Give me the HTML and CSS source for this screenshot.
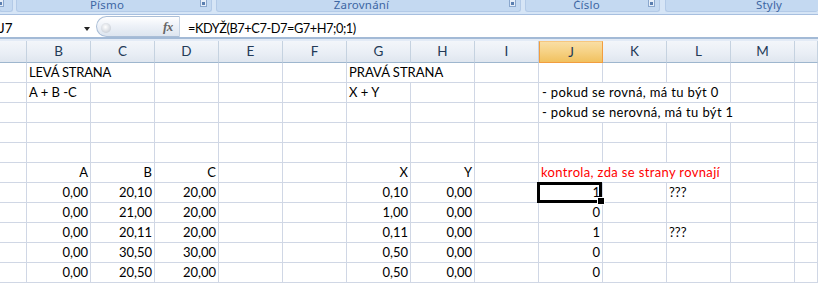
FILE: index.html
```html
<!DOCTYPE html>
<html lang="cs">
<head>
<meta charset="utf-8">
<title>Excel</title>
<link rel="stylesheet" href="styles.css">
</head>
<body>
<div class="ribbon">
  <div class="group g0"><span class="launcher"></span></div>
  <div class="group g1"><span class="glabel">Písmo</span><span class="launcher"></span></div>
  <div class="group g2"><span class="glabel">Zarovnání</span><span class="launcher"></span></div>
  <div class="group g3"><span class="glabel">Číslo</span><span class="launcher"></span></div>
  <div class="group g4"><span class="glabel">Styly</span></div>
</div>
<div class="fbar">
  <div class="namebox"><span class="nb-text">J7</span><span class="dd"></span></div>
  <div class="pill"><span class="knob"></span><span class="fx">fx</span></div>
  <div class="formula">=KDYŽ(B7+C7-D7=G7+H7;0;1)</div>
</div>
<div class="fbar-gap"></div>
<div class="sheet">
  <div class="hd"></div><div class="hd">B</div><div class="hd">C</div><div class="hd">D</div><div class="hd">E</div><div class="hd">F</div><div class="hd">G</div><div class="hd">H</div><div class="hd">I</div><div class="hd hd-sel">J</div><div class="hd">K</div><div class="hd">L</div><div class="hd">M</div><div class="hd"></div>

  <div class="c"></div><div class="c s2 caps">LEVÁ STRANA</div><div class="c"></div><div class="c"></div><div class="c"></div><div class="c s2">PRAVÁ STRANA</div><div class="c"></div><div class="c"></div><div class="c"></div><div class="c"></div><div class="c"></div><div class="c"></div>

  <div class="c"></div><div class="c">A + B -C</div><div class="c"></div><div class="c"></div><div class="c"></div><div class="c"></div><div class="c">X + Y</div><div class="c"></div><div class="c"></div><div class="c s3 t">- pokud se rovná, má tu být 0</div><div class="c"></div><div class="c"></div>

  <div class="c"></div><div class="c"></div><div class="c"></div><div class="c"></div><div class="c"></div><div class="c"></div><div class="c"></div><div class="c"></div><div class="c"></div><div class="c s4 t">- pokud se nerovná, má tu být 1</div><div class="c"></div>

  <div class="c"></div><div class="c"></div><div class="c"></div><div class="c"></div><div class="c"></div><div class="c"></div><div class="c"></div><div class="c"></div><div class="c"></div><div class="c"></div><div class="c"></div><div class="c"></div><div class="c"></div><div class="c"></div>

  <div class="c"></div><div class="c"></div><div class="c"></div><div class="c"></div><div class="c"></div><div class="c"></div><div class="c"></div><div class="c"></div><div class="c"></div><div class="c"></div><div class="c"></div><div class="c"></div><div class="c"></div><div class="c"></div>

  <div class="c"></div><div class="c r">A</div><div class="c r">B</div><div class="c r">C</div><div class="c"></div><div class="c"></div><div class="c r">X</div><div class="c r">Y</div><div class="c"></div><div class="c s3 t red">kontrola, zda se strany rovnají</div><div class="c"></div><div class="c"></div>

  <div class="c"></div><div class="c r">0,00</div><div class="c r">20,10</div><div class="c r">20,00</div><div class="c"></div><div class="c"></div><div class="c r">0,10</div><div class="c r">0,00</div><div class="c"></div><div class="c r sel">1</div><div class="c"></div><div class="c">???</div><div class="c"></div><div class="c"></div>

  <div class="c"></div><div class="c r">0,00</div><div class="c r">21,00</div><div class="c r">20,00</div><div class="c"></div><div class="c"></div><div class="c r">1,00</div><div class="c r">0,00</div><div class="c"></div><div class="c r">0</div><div class="c"></div><div class="c"></div><div class="c"></div><div class="c"></div>

  <div class="c"></div><div class="c r">0,00</div><div class="c r">20,11</div><div class="c r">20,00</div><div class="c"></div><div class="c"></div><div class="c r">0,11</div><div class="c r">0,00</div><div class="c"></div><div class="c r">1</div><div class="c"></div><div class="c">???</div><div class="c"></div><div class="c"></div>

  <div class="c"></div><div class="c r">0,00</div><div class="c r">30,50</div><div class="c r">30,00</div><div class="c"></div><div class="c"></div><div class="c r">0,50</div><div class="c r">0,00</div><div class="c"></div><div class="c r">0</div><div class="c"></div><div class="c"></div><div class="c"></div><div class="c"></div>

  <div class="c"></div><div class="c r">0,00</div><div class="c r">20,50</div><div class="c r">20,00</div><div class="c"></div><div class="c"></div><div class="c r">0,50</div><div class="c r">0,00</div><div class="c"></div><div class="c r">0</div><div class="c"></div><div class="c"></div><div class="c"></div><div class="c"></div>
</div>
</body>
</html>
```

FILE: styles.css
```css
* {
  box-sizing: border-box;
  margin: 0;
  padding: 0;
}

body {
  width: 818px;
  height: 283px;
  overflow: hidden;
  background: #ffffff;
  font-family: Lato, "Open Sans", sans-serif;
  color: #000;
}

/* ribbon group label strip */
.ribbon {
  display: flex;
  height: 15px;
  background: #d6e5f6;
  border-bottom: 1px solid #a7bfdf;
  overflow: hidden;
}

.group {
  position: relative;
  height: 12px;
  background: #c4d9f1;
  border: 1px solid #b3cae7;
  border-top: none;
  border-radius: 0 0 3px 3px;
  display: flex;
  justify-content: center;
  align-items: flex-start;
}

.g0 { width: 14px; margin-left: -1px; }
.g1 { width: 196px; margin-left: 3px; padding-right: 14px; }
.g2 { width: 305px; margin-left: 4px; padding-right: 14px; }
.g3 { width: 135px; margin-left: 4px; padding-right: 12px; }
.g4 { flex: 1; margin-left: 5px; justify-content: flex-start; padding-left: 90px; border-right: none; }

.glabel {
  font-family: "Noto Sans", sans-serif;
  font-size: 11.5px;
  line-height: 11px;
  margin-top: -1px;
  color: #3d66a3;
  letter-spacing: 0.2px;
}

.launcher {
  position: absolute;
  right: 4px;
  top: 0;
  width: 7px;
  height: 7px;
  border: 1px solid #8aa7cd;
  border-top: none;
  background: #e6eef8;
}

.launcher::after {
  content: "";
  position: absolute;
  right: 1px;
  bottom: 1px;
  width: 3px;
  height: 3px;
  background: #5b7fb0;
}

.g0 .launcher { right: 8px; }

/* formula bar */
.fbar {
  display: flex;
  align-items: stretch;
  height: 24px;
  background: #ffffff;
  border-bottom: 2px solid #a3bad6;
}

.namebox {
  position: relative;
  width: 96px;
  display: flex;
  align-items: center;
  font-size: 13.5px;
}

.nb-text {
  margin-left: -1px;
  margin-top: 3px;
}

.dd {
  position: absolute;
  left: 84px;
  top: 12px;
  width: 0;
  height: 0;
  border-left: 3.5px solid transparent;
  border-right: 3.5px solid transparent;
  border-top: 4px solid #222;
}

.pill {
  position: relative;
  width: 84px;
  margin: 1px 0 0 0;
  border: 1px solid #aabed7;
  border-right: 1px solid #c6d3e3;
  border-radius: 11px 0 0 11px;
  background: linear-gradient(#ffffff 0%, #eef2f8 45%, #dde5ef 100%);
}

.knob {
  position: absolute;
  left: 4px;
  top: 6px;
  width: 10px;
  height: 10px;
  border-radius: 50%;
  background: radial-gradient(circle at 45% 40%, #ffffff 0%, #d9dde3 55%, #b9c0ca 100%);
}

.fx {
  position: absolute;
  left: 66px;
  top: 2px;
  font-family: "Liberation Serif", serif;
  font-style: italic;
  font-weight: bold;
  font-size: 13px;
  color: #666666;
  letter-spacing: -0.5px;
}

.formula {
  flex: 1;
  padding-left: 8px;
  font-size: 12.8px;
  letter-spacing: -0.45px;
  line-height: 22px;
  padding-top: 2px;
}

.fbar-gap {
  height: 2px;
  background: #e3ebf6;
}

/* sheet */
.sheet {
  display: grid;
  grid-template-columns: 27px repeat(12, 64px) 23px;
  grid-template-rows: 22px;
  grid-auto-rows: 20px;
  font-size: 13px;
}

.hd {
  height: 22px;
  border-right: 1px solid #c5d2e0;
  border-bottom: 1px solid #9eb6ce;
  background: linear-gradient(#f3f6fa 0%, #e9eef5 60%, #dfe6ef 100%);
  text-align: center;
  line-height: 21px;
  font-size: 13.5px;
  color: #233a57;
}

.hd-sel {
  background: linear-gradient(#f9dea4 0%, #f6d183 50%, #f1c15f 100%);
  border: 1px solid #f29d3f;
  border-top-color: #f7c77f;
}

.c {
  border-right: 1px solid #d0d7e5;
  border-bottom: 1px solid #d0d7e5;
  line-height: 19px;
  padding: 0 2px 0 2px;
  white-space: nowrap;
  overflow: hidden;
}

.caps {
  letter-spacing: -0.2px;
}

.t {
  letter-spacing: 0.35px;
  padding-left: 3px;
}

.r {
  text-align: right;
}

.s2 { grid-column: span 2; }
.s3 { grid-column: span 3; }
.s4 { grid-column: span 4; }

.red {
  color: #ff0000;
  padding-left: 2px;
}

.sel {
  position: relative;
  overflow: visible;
}

.sel::after {
  content: "";
  position: absolute;
  left: -2px;
  top: -1px;
  right: 0;
  bottom: -1px;
  border: 3px solid #000;
}

.sel::before {
  content: "";
  position: absolute;
  right: -3px;
  bottom: -3px;
  width: 6px;
  height: 6px;
  background: #000;
  border: 1px solid #fff;
  z-index: 2;
}
```
